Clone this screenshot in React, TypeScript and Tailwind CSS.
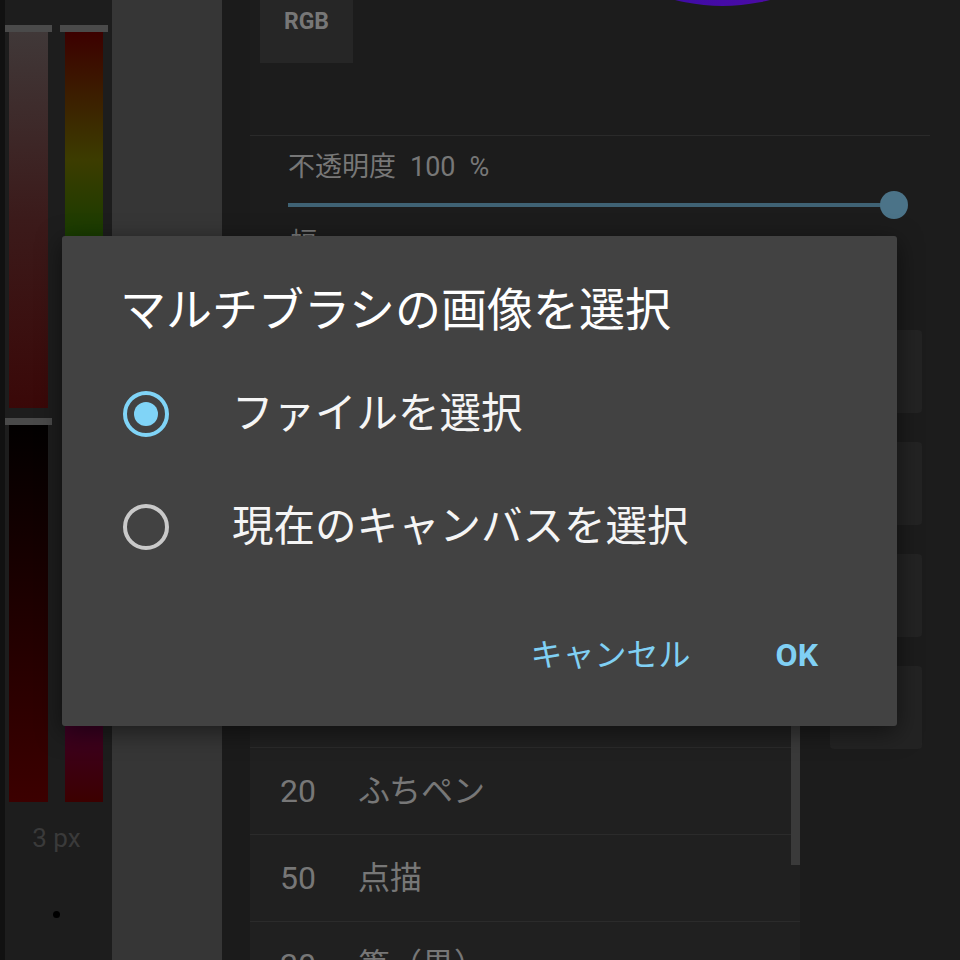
import React from "react";

const rows = [
  { n: "", name: "" },
  { n: "", name: "" },
  { n: "", name: "" },
  { n: "", name: "" },
  { n: "", name: "" },
  { n: "20", name: "ふちペン" },
  { n: "50", name: "点描" },
  { n: "20", name: "筆（黒）" },
];

function Radio({ checked }: { checked: boolean }) {
  return checked ? (
    <div className="w-[46px] h-[46px] rounded-full border-[4px] border-[#80d4f7] flex items-center justify-center">
      <div className="w-[24px] h-[24px] rounded-full bg-[#80d4f7]" />
    </div>
  ) : (
    <div className="w-[46px] h-[46px] rounded-full border-[4px] border-[#c9c9c9]" />
  );
}

export default function App() {
  return (
    <div className="relative flex w-[960px] h-[960px] overflow-hidden bg-[#111111] font-[family-name:Roboto,'Noto_Sans_CJK_JP',sans-serif]">
      <div className="w-[5px] bg-[#111111]" />

      {/* colour sliders */}
      <div className="w-[107px] bg-[#1d1d1d] flex flex-col">
        <div className="flex gap-[8px] pt-[25px] h-[802px] shrink-0">
          <div className="w-[47px] flex flex-col">
            <div className="h-[7px] bg-[#4a4a4a]" />
            <div className="mx-[4px] h-[376px] bg-[linear-gradient(to_bottom,#403838,#3b1a1a,#3a0808)]" />
            <div className="h-[10px]" />
            <div className="h-[7px] bg-[#4a4a4a]" />
            <div className="mx-[4px] flex-1 bg-[linear-gradient(to_bottom,#020000,#3c0000)]" />
          </div>
          <div className="w-[48px] flex flex-col">
            <div className="h-[7px] bg-[#4a4a4a]" />
            <div className="mx-[5px] flex-1 bg-[linear-gradient(to_bottom,#3c0000,#3c3c00,#003c00,#003c3c,#00003c,#3c003c,#3c0000)]" />
          </div>
        </div>
        <div className="mt-[21px] pr-[4px] text-center text-[26px] leading-[30px] text-[#3a3a3a]">3 px</div>
        <div className="mt-[58px] ml-[48px] w-[7px] h-[7px] rounded-full bg-black" />
      </div>

      <div className="w-[110px] bg-[#363636]" />
      <div className="w-[28px] bg-[#1b1b1b]" />

      {/* main panel */}
      <div className="flex-1 flex flex-col bg-[#1c1c1c] overflow-hidden">
        <div className="h-[136px] shrink-0 mr-[30px] border-b border-[#2a2a2a] flex items-start">
          <div className="ml-[10px] w-[93px] h-[63px] bg-[#262626] flex justify-center pt-[8px] text-[23px] leading-[28px] font-bold text-[#777777]">
            RGB
          </div>
          <svg className="ml-[322px]" width="95" height="7" viewBox="0 0 95 7">
            <defs>
              <linearGradient id="wheel" x1="0" x2="1" y1="0" y2="0">
                <stop offset="0" stopColor="#2d10a0" />
                <stop offset="0.5" stopColor="#450ba6" />
                <stop offset="1" stopColor="#5e0c9a" />
              </linearGradient>
            </defs>
            <circle cx="47.5" cy="-185" r="191" fill="url(#wheel)" />
          </svg>
        </div>

        <div className="shrink-0 mt-[13px] pl-[38px] flex gap-[14px] text-[27px] leading-[36px] text-[#777777]">
          <span>不透明度</span>
          <span>100</span>
          <span>%</span>
        </div>
        <div className="shrink-0 mt-[6px] ml-[38px] w-[620px] h-[28px] flex items-center">
          <div className="flex-1 h-[4px] bg-[#3f6274]" />
          <div className="-ml-[14px] w-[28px] h-[28px] rounded-full bg-[#4b7388]" />
        </div>

        <div className="shrink-0 mt-[6px] pl-[40px] text-[27px] leading-[36px] text-[#777777]">幅</div>
        <div className="shrink-0 mt-[6px] ml-[38px] w-[560px] h-[28px] flex items-center">
          <div className="w-[60px] h-[4px] bg-[#3f6274]" />
          <div className="-ml-[14px] w-[28px] h-[28px] rounded-full bg-[#4b7388]" />
          <div className="flex-1 h-[4px] bg-[#333333]" />
        </div>

        <div className="shrink-0 mt-[17px] flex h-[700px]">
          <div className="relative w-[550px] bg-[#202020]">
            {rows.map((r, i) => (
              <div
                key={i}
                className="h-[87px] border-t border-[#2b2b2b] flex items-center pl-[30px] text-[32px] text-[#777777]"
              >
                <span className="w-[78px]">{r.n}</span>
                <span>{r.name}</span>
              </div>
            ))}
            <div className="absolute right-0 top-[300px] w-[9px] h-[253px] bg-[#3a3a3a]" />
          </div>
          <div className="ml-[30px] w-[92px] pt-[18px] flex flex-col gap-[29px]">
            <div className="h-[83px] rounded-[4px] bg-[#232323]" />
            <div className="h-[83px] rounded-[4px] bg-[#232323]" />
            <div className="h-[83px] rounded-[4px] bg-[#232323]" />
            <div className="h-[83px] rounded-[4px] bg-[#232323]" />
          </div>
        </div>
      </div>

      {/* dialog */}
      <div className="absolute left-[62px] top-[236px] w-[835px] h-[490px] bg-[#424242] rounded-[3px] shadow-[0_6px_24px_rgba(0,0,0,0.5)] flex flex-col">
        <div className="mt-[46px] pl-[58px] text-[46px] leading-[56px] text-white">
          マルチブラシの画像を選択
        </div>
        <div className="mt-[19px] flex flex-col">
          <div className="h-[113px] flex items-center pl-[61px] gap-[63px]">
            <Radio checked />
            <span className="text-[41.5px] leading-[50px] text-[#f5f5f5]">ファイルを選択</span>
          </div>
          <div className="h-[113px] flex items-center pl-[61px] gap-[63px]">
            <Radio checked={false} />
            <span className="text-[41.5px] leading-[50px] text-[#f5f5f5]">現在のキャンバスを選択</span>
          </div>
        </div>
        <div className="mt-[52px] flex justify-end items-center pr-[79px] gap-[85px] text-[32px] leading-[40px] text-[#80d0f4]">
          <span>キャンセル</span>
          <span className="font-bold">OK</span>
        </div>
      </div>
    </div>
  );
}
